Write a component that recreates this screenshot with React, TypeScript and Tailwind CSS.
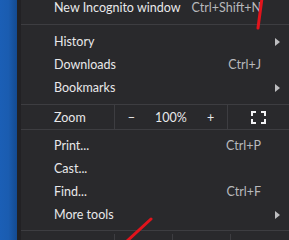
import React from 'react';

const Arrow = () => (
  <svg width="5" height="8" viewBox="0 0 5 8" className="block">
    <path d="M0 0L5 4L0 8Z" fill="#bdbdc0" />
  </svg>
);

function Row({ label, shortcut, sub }: { label: string; shortcut?: string; sub?: boolean }) {
  return (
    <div className="flex items-center h-[23px] pl-[33px] pr-[9px] whitespace-nowrap">
      <span className="flex-1 text-[#e8e8ea]">{label}</span>
      {shortcut && <span className="shrink-0 text-[#b8b9bc]">{shortcut}</span>}
      <span className="w-[5px] ml-[14px] shrink-0 flex justify-center">{sub && <Arrow />}</span>
    </div>
  );
}

const Sep = () => <div className="h-px bg-[#3d3d41]" />;

export default function App() {
  return (
    <div className="relative w-[289px] h-[240px] overflow-hidden flex bg-[#29292c] text-[12.5px] leading-[23px] font-['Lato',sans-serif]">
      <div className="w-[17px] shrink-0 bg-gradient-to-r from-[#1b5fb6] via-[#1a5cb0] to-[#144a90]" />
      <div className="w-[4px] shrink-0 bg-[#222124]" />
      <div className="flex-1 min-w-0">
        <div className="-mt-[4px] pb-[5px]">
          <Row label="New Incognito window" shortcut="Ctrl+Shift+N" />
        </div>
        <Sep />
        <div className="py-[5px]">
          <Row label="History" sub />
          <Row label="Downloads" shortcut="Ctrl+J" />
          <Row label="Bookmarks" sub />
        </div>
        <Sep />
        <div className="flex h-[24px] items-center text-[#e8e8ea]">
          <div className="w-[94px] h-full flex items-center pl-[33px] border-r border-[#3d3d41]">Zoom</div>
          <div className="w-[113px] h-full flex items-center justify-center gap-[20px] border-r border-[#3d3d41]">
            <span>−</span>
            <span>100%</span>
            <span>+</span>
          </div>
          <div className="flex-1 h-full flex items-center justify-center">
            <svg width="15" height="13" viewBox="0 0 15 13" fill="none" stroke="#f2f2f4" strokeWidth="2">
              <path d="M1 5V1H5M10 1H14V5M14 8V12H10M5 12H1V8" />
            </svg>
          </div>
        </div>
        <Sep />
        <div className="py-[4px]">
          <Row label="Print..." shortcut="Ctrl+P" />
          <Row label="Cast..." />
          <Row label="Find..." shortcut="Ctrl+F" />
          <Row label="More tools" sub />
        </div>
        <Sep />
        <div className="flex h-[24px] pt-[3px] text-[#d8d8da]">
          <div className="w-[94px] pl-[33px] border-r border-[#3d3d41]">Edit</div>
          <div className="w-[58px] text-center border-r border-[#3d3d41]">Cut</div>
          <div className="w-[58px] text-center border-r border-[#3d3d41]">Copy</div>
          <div className="flex-1 text-center">Paste</div>
        </div>
      </div>
      <svg className="absolute inset-0 pointer-events-none" width="289" height="240">
        <path d="M262 -2L258 28" stroke="#e0141c" strokeWidth="3" strokeLinecap="round" />
        <path d="M151 219L126 242" stroke="#e0141c" strokeWidth="3" strokeLinecap="round" />
      </svg>
    </div>
  );
}
